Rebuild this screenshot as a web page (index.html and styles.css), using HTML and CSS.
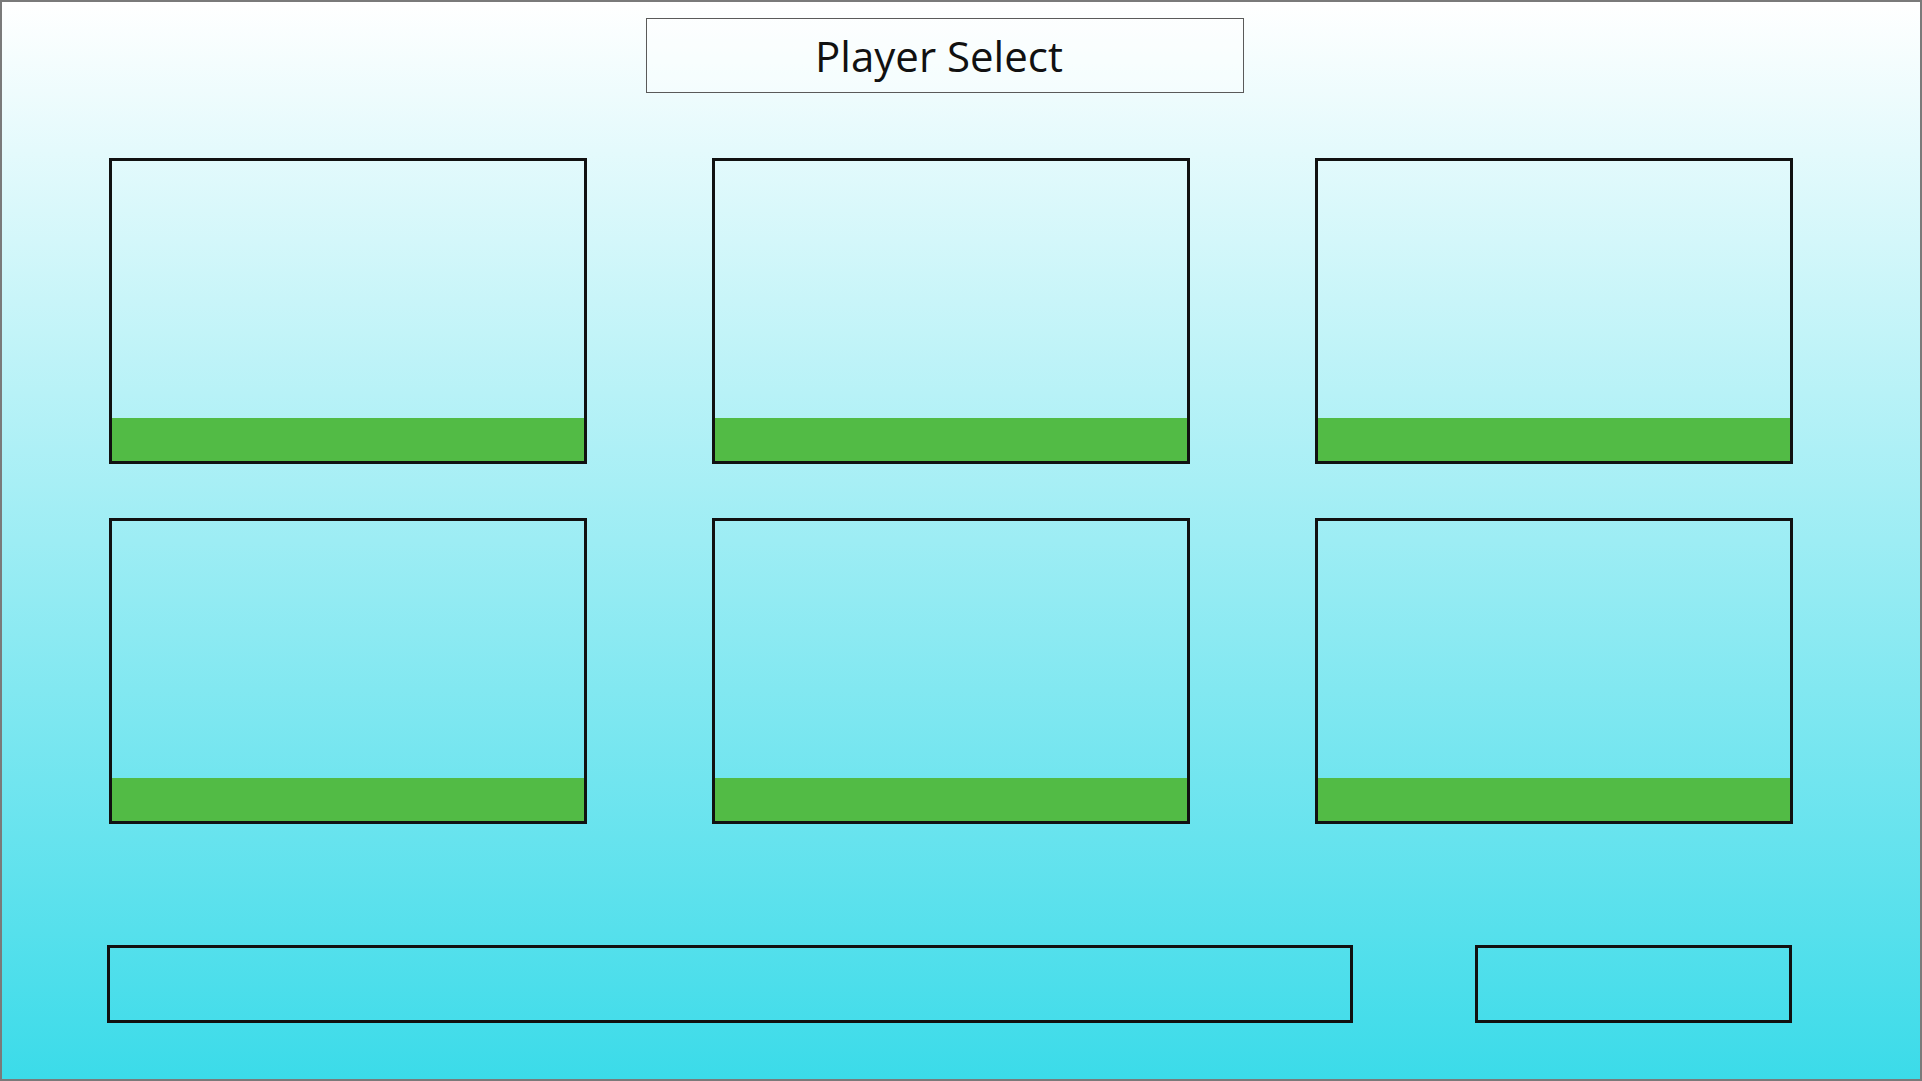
FILE: index.html
```html
<!DOCTYPE html>
<html lang="en">
<head>
  <meta charset="UTF-8" />
  <meta name="viewport" content="width=device-width, initial-scale=1.0"/>
  <title>Player Select</title>
  <link rel="stylesheet" href="styles.css">
</head>
<body>

  <div class="screen">
    <header class="title-box">
      <h1 class="title">Player Select</h1>
    </header>

    <main class="player-grid">
      <div class="player-slot"><div class="slot-ground"></div></div>
      <div class="player-slot"><div class="slot-ground"></div></div>
      <div class="player-slot"><div class="slot-ground"></div></div>
      <div class="player-slot"><div class="slot-ground"></div></div>
      <div class="player-slot"><div class="slot-ground"></div></div>
      <div class="player-slot"><div class="slot-ground"></div></div>
    </main>

    <footer class="action-bar">
      <div class="name-field"></div>
      <div class="confirm-button"></div>
    </footer>
  </div>

</body>
</html>
```

FILE: styles.css
```css
* {
  box-sizing: border-box;
}

html,
body {
  margin: 0;
  padding: 0;
}

.screen {
  width: 1922px;
  height: 1081px;
  padding: 16px 0 0 107px;
  border: 2px solid #7a7a7a;
  background: linear-gradient(to bottom, #ffffff 0%, #3bdbe9 100%);
  display: flex;
  flex-direction: column;
}

.title-box {
  width: 598px;
  height: 75px;
  margin-left: 537px;
  padding-right: 12px;
  border: 1px solid #5a5a5a;
  background-color: rgba(255, 255, 255, 0.35);
  display: flex;
  align-items: center;
  justify-content: center;
}

.title {
  margin: 0;
  font-family: "Open Sans", Lato, sans-serif;
  font-size: 42px;
  font-weight: 400;
  color: #111;
}

.player-grid {
  margin-top: 65px;
  display: grid;
  grid-template-columns: repeat(3, 478px);
  grid-template-rows: repeat(2, 306px);
  column-gap: 125px;
  row-gap: 54px;
}

.player-slot {
  border: 3px solid #111;
  display: flex;
  flex-direction: column;
  justify-content: flex-end;
}

.slot-ground {
  height: 43px;
  background-color: #52bb45;
}

.action-bar {
  margin-top: 121px;
  margin-left: -2px;
  display: flex;
  gap: 122px;
}

.name-field,
.confirm-button {
  height: 78px;
  border: 3px solid #111;
}

.name-field {
  width: 1246px;
}

.confirm-button {
  width: 317px;
}
```
